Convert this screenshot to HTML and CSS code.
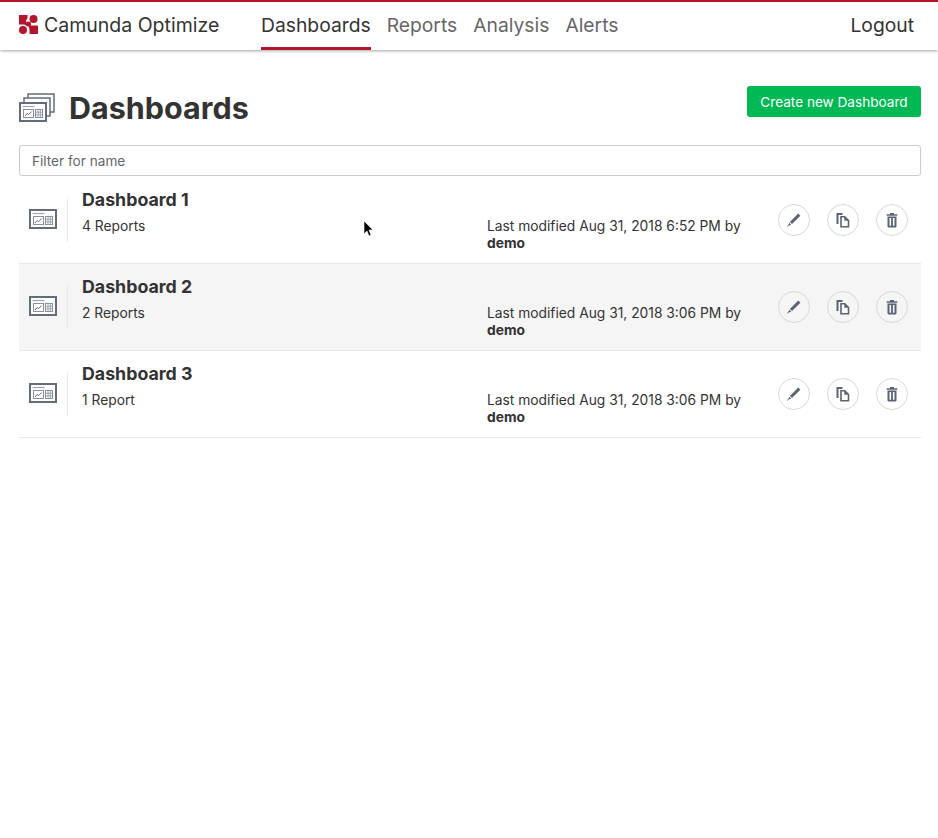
FILE: index.html
```html
<!DOCTYPE html>
<html lang="en">
<head>
    <meta charset="UTF-8">
    <title>Camunda Optimize</title>
    <link rel="stylesheet" href="styles.css">
</head>
<body>
    <svg class="sprites" width="0" height="0">
        <defs>
            <symbol id="dash" viewBox="0 0 28 20">
                <rect x="1" y="1" width="26" height="18" fill="#fff" stroke="#646c7a" stroke-width="2"/>
                <path d="M3.500 4.500h12" stroke="#a0a5ae" stroke-width="1.200"/>
                <rect x="4.500" y="7.500" width="10" height="8" fill="#fff" stroke="#8a909b"/>
                <path d="M6 14l2.200-2.500 1.500 1 3-3" fill="none" stroke="#5b6474"/>
                <rect x="16.500" y="7.500" width="7" height="8" fill="#fff" stroke="#8a909b"/>
                <path d="M17 10.200h6M17 12.800h6M19 8v7M21.300 8v7" stroke="#8a909b" stroke-width=".8"/>
            </symbol>
            <symbol id="pencil" viewBox="0 0 16 16">
                <path d="M12.300 1.600l2.100 2.100-8.400 8.400-2.100-2.100zM3.300 10.800l1.900 1.900-2.500.9-1.200 1.100-.5-.5 1.200-1.100z" fill="#5b6474"/>
            </symbol>
            <symbol id="copy" viewBox="0 0 16 16">
                <path d="M1.500 1h6v2H3.500v9h-2z" fill="#5b6474"/>
                <path d="M6 4.800h3.800l3.700 3.700v6.200H6z" fill="#fff" stroke="#5b6474" stroke-width="1.600"/>
                <path d="M9.300 4.500v4.300h4.200z" fill="#5b6474"/>
            </symbol>
            <symbol id="trash" viewBox="0 0 16 16">
                <path d="M2.700 2.200h10.600v1.600H2.700zM6 1h4v1.400H6z" fill="#5b6474"/>
                <path d="M3.500 4.500h9v10.300l-1 .7h-7l-1-.7zM5.500 6v7.800h1.600V6zM8.900 6v7.800h1.600V6z" fill="#5b6474" fill-rule="evenodd"/>
            </symbol>
        </defs>
    </svg>

    <header class="header">
        <a class="brand">
            <svg class="brand-logo" viewBox="0 0 19 19">
                <path d="M0 0h8.500v3.500a3 3 0 0 0 0 5l-1 2.500a3 3 0 0 0-2.500-1.500H0z" fill="#b5152b"/>
                <circle cx="14.500" cy="4" r="4" fill="#b5152b"/>
                <circle cx="4" cy="15" r="4" fill="#b5152b"/>
                <path d="M11 10.500h8V19h-8.500v-4a4 4 0 0 0-1-3z" fill="#b5152b"/>
                <circle cx="9.500" cy="9" r="2.600" fill="#b5152b"/>
            </svg>
            <span>Camunda Optimize</span>
        </a>
        <nav class="nav">
            <a class="nav-item active">Dashboards</a>
            <a class="nav-item">Reports</a>
            <a class="nav-item">Analysis</a>
            <a class="nav-item">Alerts</a>
        </nav>
        <a class="logout">Logout</a>
    </header>

    <main class="main">
        <div class="title-row">
            <div class="title">
                <svg class="title-icon" viewBox="0 0 36 29">
                    <rect x="9" y="1" width="26" height="18" fill="#fff" stroke="#646c7a" stroke-width="1.500"/>
                    <rect x="5" y="5" width="26" height="18" fill="#fff" stroke="#646c7a" stroke-width="1.500"/>
                    <use href="#dash" x="0" y="9" width="28" height="20"/>
                </svg>
                <h1>Dashboards</h1>
            </div>
            <button class="create-btn">Create new Dashboard</button>
        </div>

        <input class="filter" type="text" placeholder="Filter for name">

        <ul class="list">
            <li class="row">
                <div class="row-icon"><svg width="28" height="20"><use href="#dash"/></svg></div>
                <div class="row-info">
                    <div class="row-name">Dashboard 1</div>
                    <div class="row-meta">4 Reports</div>
                </div>
                <div class="row-modified">Last modified Aug 31, 2018 6:52 PM by <b>demo</b></div>
                <div class="row-actions">
                    <button class="round-btn"><svg><use href="#pencil"/></svg></button>
                    <button class="round-btn"><svg><use href="#copy"/></svg></button>
                    <button class="round-btn"><svg><use href="#trash"/></svg></button>
                </div>
            </li>
            <li class="row hovered">
                <div class="row-icon"><svg width="28" height="20"><use href="#dash"/></svg></div>
                <div class="row-info">
                    <div class="row-name">Dashboard 2</div>
                    <div class="row-meta">2 Reports</div>
                </div>
                <div class="row-modified">Last modified Aug 31, 2018 3:06 PM by <b>demo</b></div>
                <div class="row-actions">
                    <button class="round-btn"><svg><use href="#pencil"/></svg></button>
                    <button class="round-btn"><svg><use href="#copy"/></svg></button>
                    <button class="round-btn"><svg><use href="#trash"/></svg></button>
                </div>
            </li>
            <li class="row">
                <div class="row-icon"><svg width="28" height="20"><use href="#dash"/></svg></div>
                <div class="row-info">
                    <div class="row-name">Dashboard 3</div>
                    <div class="row-meta">1 Report</div>
                </div>
                <div class="row-modified">Last modified Aug 31, 2018 3:06 PM by <b>demo</b></div>
                <div class="row-actions">
                    <button class="round-btn"><svg><use href="#pencil"/></svg></button>
                    <button class="round-btn"><svg><use href="#copy"/></svg></button>
                    <button class="round-btn"><svg><use href="#trash"/></svg></button>
                </div>
            </li>
        </ul>
    </main>

    <svg class="cursor" width="12" height="18" viewBox="0 0 12 18">
        <path d="M1 1v13l3-3 2 5 2-1-2-5h4z" fill="#000" stroke="#fff" stroke-width=".6"/>
    </svg>
</body>
</html>
```

FILE: styles.css
```css
* {
    box-sizing: border-box;
}

body {
    margin: 0;
    font-family: Inter, "Liberation Sans", sans-serif;
    color: #333;
    background: #fff;
}

.sprites {
    position: absolute;
}

.header {
    display: flex;
    align-items: stretch;
    height: 50px;
    padding: 0 24px 0 19px;
    background: #fff;
    border-top: 2px solid #b5152b;
    box-shadow: 0 1px 3px rgba(0, 0, 0, 0.35);
}

.brand {
    display: flex;
    align-items: center;
    gap: 6px;
    font-size: 19.500px;
    width: 242px;
    padding-bottom: 3px;
}

.brand-logo {
    width: 19px;
    height: 19px;
}

.nav {
    display: flex;
    gap: 16px;
    flex: 1;
}

.nav-item {
    display: flex;
    align-items: center;
    font-size: 19.300px;
    color: #666;
    border-bottom: 3px solid transparent;
}

.nav-item.active {
    color: #333;
    border-bottom-color: #b5152b;
}

.logout {
    display: flex;
    align-items: center;
    font-size: 19.300px;
    padding-bottom: 3px;
}

.main {
    padding: 0 17px 0 19px;
}

.title-row {
    display: flex;
    justify-content: space-between;
    height: 95px;
    padding-top: 36px;
}

.title {
    display: flex;
    align-items: flex-start;
    gap: 14px;
}

.title-icon {
    width: 36px;
    height: 29px;
    margin-top: 7px;
}

h1 {
    margin: 0;
    font-size: 30.500px;
    font-weight: 700;
    line-height: 44px;
}

.create-btn {
    width: 174px;
    height: 31px;
    background: #00b954;
    color: #fff;
    border: 0;
    border-radius: 3px;
    font-family: inherit;
    font-size: 13.600px;
    cursor: pointer;
}

.filter {
    display: block;
    width: 100%;
    height: 31px;
    padding: 0 12px;
    border: 1px solid #ccc;
    border-radius: 3px;
    font-family: inherit;
    font-size: 13.600px;
    color: #333;
}

.filter::placeholder {
    color: #666;
}

.list {
    list-style: none;
    margin: 0;
    padding: 1px 0 0;
}

.row {
    display: flex;
    height: 87px;
    border-bottom: 1px solid #e8e8e8;
    font-size: 13.800px;
}

.row.hovered {
    background: #f5f5f5;
}

.row-icon {
    display: flex;
    align-items: center;
    justify-content: center;
    width: 49px;
    height: 43px;
    margin-top: 22px;
    padding: 0 1px 3px 0;
    border-right: 1px solid #e8e8e8;
}

.row-info {
    width: 419px;
    padding: 12px 0 0 14px;
}

.row-name {
    font-size: 17.800px;
    font-weight: 700;
    line-height: 22px;
}

.row-meta {
    margin-top: 7px;
    line-height: 17px;
}

.row-modified {
    width: 261px;
    padding-top: 41px;
    line-height: 17px;
}

.row-actions {
    display: flex;
    gap: 17px;
    margin-left: 30px;
    padding-top: 27px;
}

.round-btn {
    display: flex;
    align-items: center;
    justify-content: center;
    width: 32px;
    height: 32px;
    padding: 0;
    background: #fff;
    border: 1px solid #d8d8d8;
    border-radius: 50%;
}

.row.hovered .round-btn {
    background: #f5f5f5;
}

.round-btn svg {
    width: 16px;
    height: 16px;
}

.cursor {
    position: absolute;
    left: 363px;
    top: 220px;
}
```
